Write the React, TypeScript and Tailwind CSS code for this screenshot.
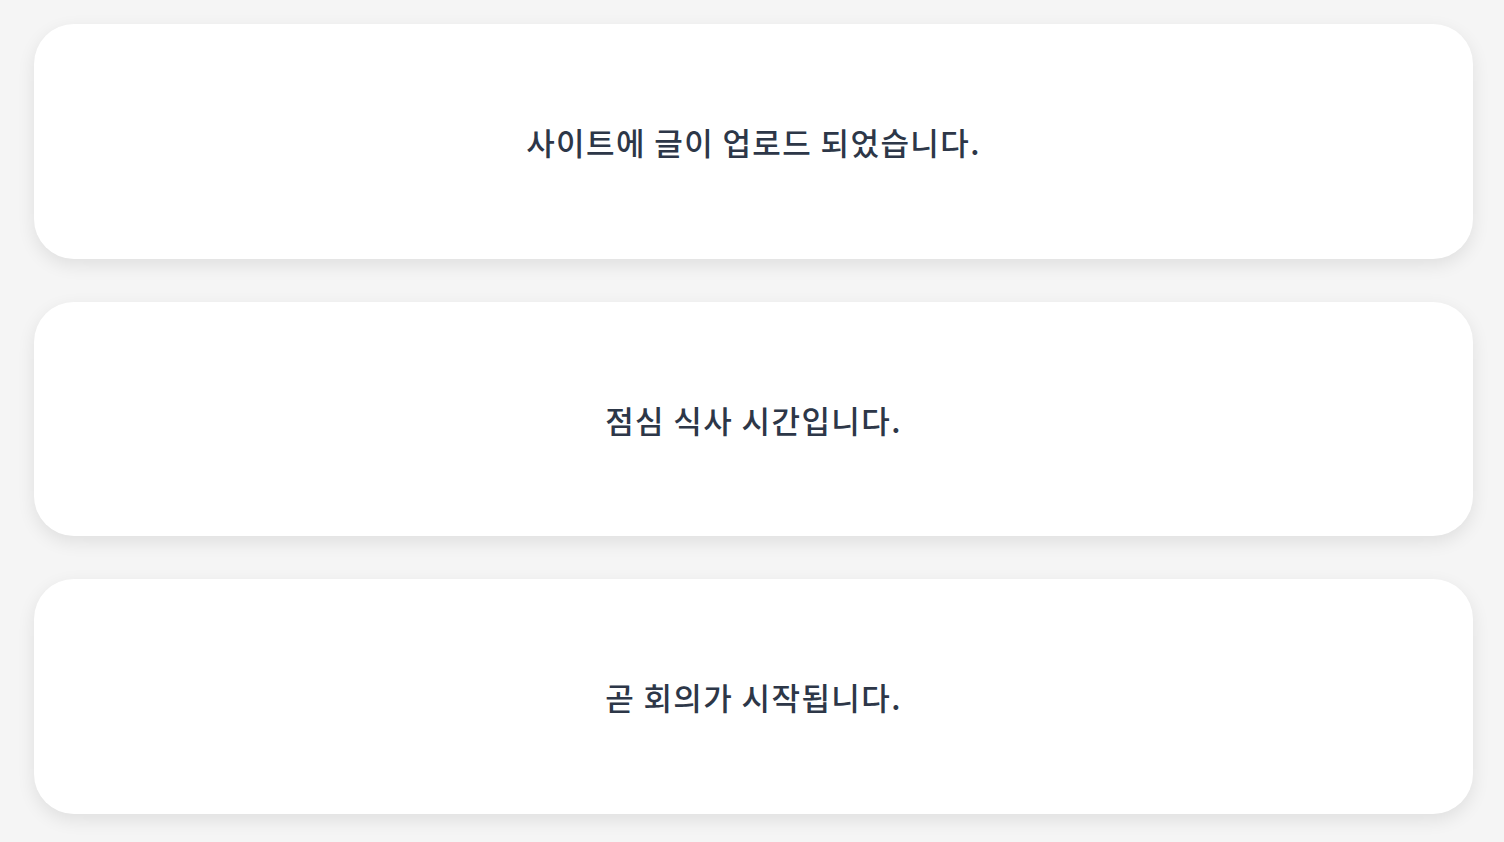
import React from "react";

const messages = [
  "사이트에 글이 업로드 되었습니다.",
  "점심 식사 시간입니다.",
  "곧 회의가 시작됩니다.",
];

export default function App() {
  return (
    <div
      className="min-h-[842px] w-full bg-[#f5f5f5] pl-[34px] pr-[31px] pt-6 pb-6 flex flex-col gap-[43px]"
      style={{ fontFamily: '"Noto Sans CJK KR", "Noto Sans", sans-serif' }}
    >
      {messages.map((m) => (
        <div
          key={m}
          className="h-[234.5px] rounded-[40px] bg-white shadow-[0_6px_18px_rgba(0,0,0,0.09)] flex items-center justify-center"
        >
          <span className="text-[31px] font-medium tracking-[1.4px] text-[#2d3748] translate-y-[1px]">{m}</span>
        </div>
      ))}
    </div>
  );
}
